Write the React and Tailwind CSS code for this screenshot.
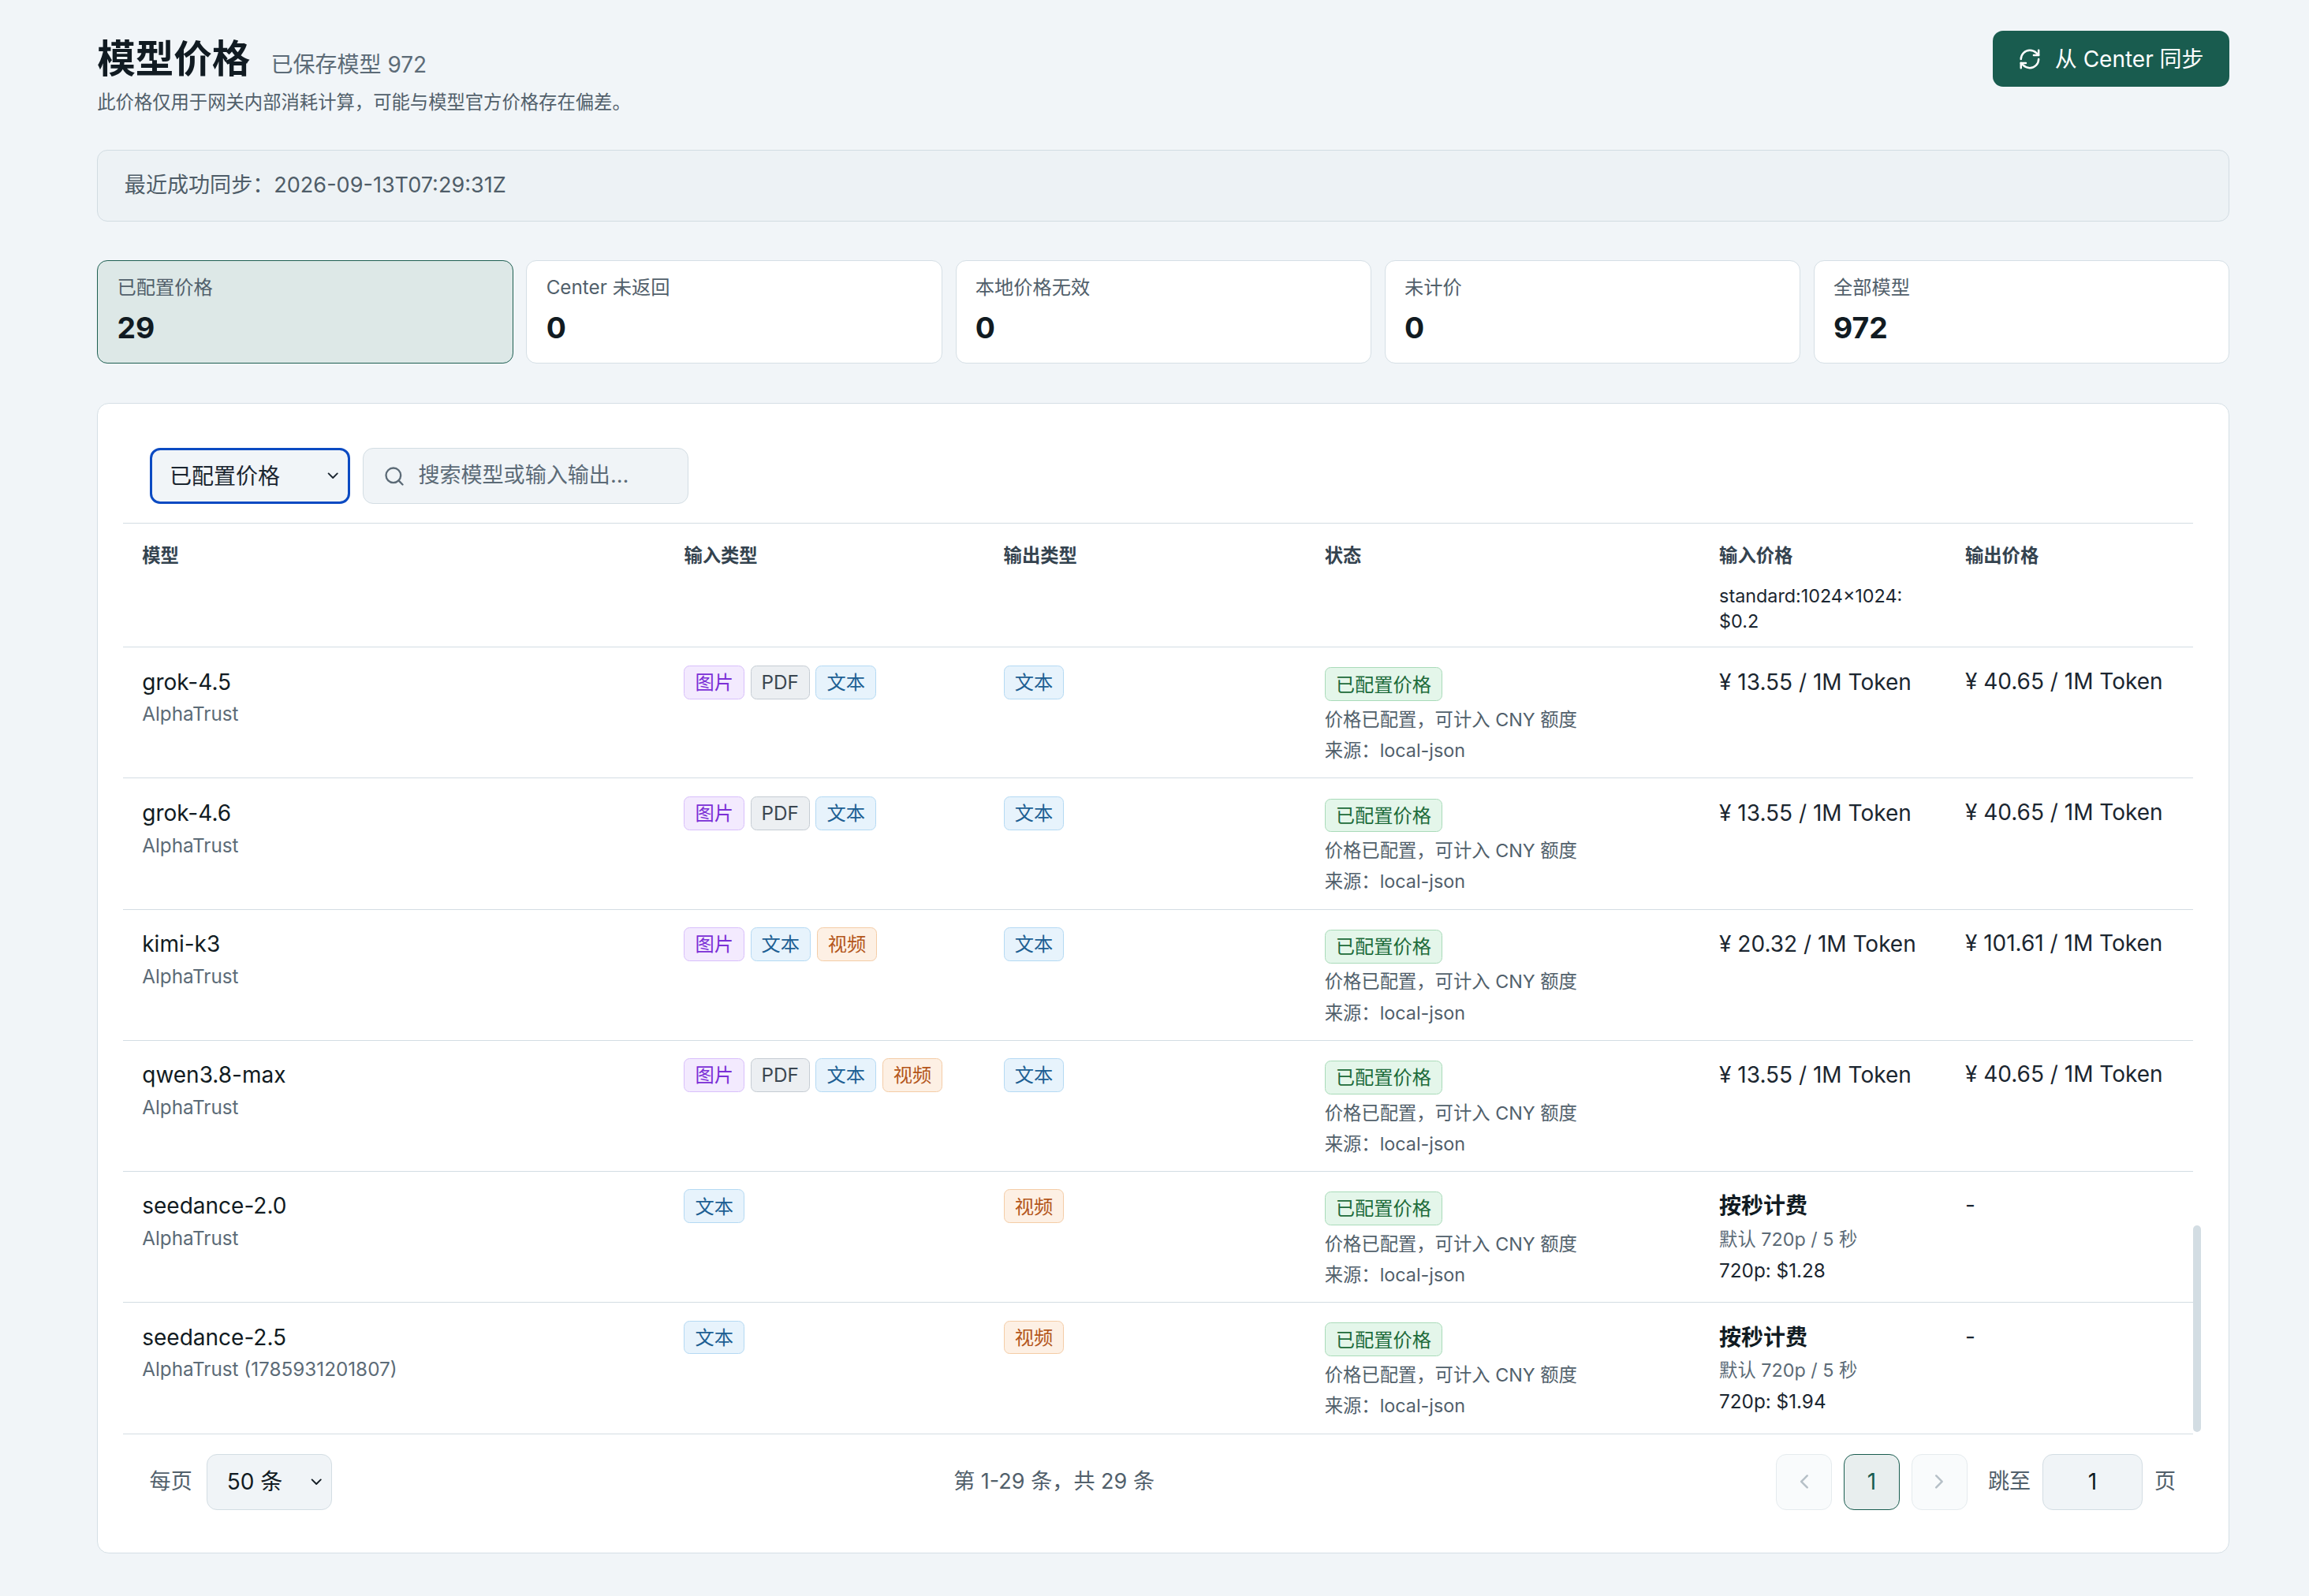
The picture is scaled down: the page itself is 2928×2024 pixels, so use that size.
import React from 'react';
import { RefreshCw, Search, ChevronDown, ChevronLeft, ChevronRight } from 'lucide-react';

const font = { fontFamily: 'Inter, "Noto Sans CJK SC", sans-serif' };

const tagStyles = {
  '图片': 'bg-[#f3eafe] border-[#d8bffb] text-[#7b2fd6]',
  'PDF': 'bg-[#eceff2] border-[#c5ccd3] text-[#3b4650]',
  '文本': 'bg-[#e7f3fc] border-[#b4d9f3] text-[#1d5f93]',
  '视频': 'bg-[#fdf0e4] border-[#f4cca6] text-[#b4561a]',
};

function Tag({ t }) {
  return <span className={`inline-flex items-center h-[23px] px-[7px] rounded-[4px] border text-[13px] ${tagStyles[t]}`}>{t}</span>;
}

const rows = [
  { name: 'grok-4.5', sub: 'AlphaTrust', inp: ['图片', 'PDF', '文本'], out: ['文本'], ip: '¥ 13.55 / 1M Token', op: '¥ 40.65 / 1M Token' },
  { name: 'grok-4.6', sub: 'AlphaTrust', inp: ['图片', 'PDF', '文本'], out: ['文本'], ip: '¥ 13.55 / 1M Token', op: '¥ 40.65 / 1M Token' },
  { name: 'kimi-k3', sub: 'AlphaTrust', inp: ['图片', '文本', '视频'], out: ['文本'], ip: '¥ 20.32 / 1M Token', op: '¥ 101.61 / 1M Token' },
  { name: 'qwen3.8-max', sub: 'AlphaTrust', inp: ['图片', 'PDF', '文本', '视频'], out: ['文本'], ip: '¥ 13.55 / 1M Token', op: '¥ 40.65 / 1M Token' },
  { name: 'seedance-2.0', sub: 'AlphaTrust', inp: ['文本'], out: ['视频'], sec: '720p: $1.28', op: '-' },
  { name: 'seedance-2.5', sub: 'AlphaTrust (1785931201807)', inp: ['文本'], out: ['视频'], sec: '720p: $1.94', op: '-' },
];

const cols = 'grid grid-cols-[368px_217px_218px_268px_167px_1fr]';

const stats = [
  ['已配置价格', '29', true], ['Center 未返回', '0'], ['本地价格无效', '0'], ['未计价', '0'], ['全部模型', '972'],
];

export default function App() {
  return (
    <div className="[zoom:1.8673] bg-[#f1f5f8] min-h-[1084px] text-[#1b2630]" style={font}>
      <div className="pl-[66px] pr-[54px] pt-[21px] pb-[26px]">
        <div className="flex justify-between items-start">
          <div>
            <div className="flex items-baseline gap-[14px] mt-[2px]">
              <h1 className="text-[26px] font-bold text-[#111b22] leading-[34px]">模型价格</h1>
              <span className="text-[15px] text-[#5c6b77]">已保存模型 972</span>
            </div>
            <p className="text-[12.5px] text-[#51606b] mt-[3px]">此价格仅用于网关内部消耗计算，可能与模型官方价格存在偏差。</p>
          </div>
          <button className="h-[38px] w-[161px] rounded-[7px] bg-[#195c4f] text-white text-[15px] flex items-center justify-center gap-[9px]">
            <RefreshCw size={16} strokeWidth={2} /> 从 Center 同步
          </button>
        </div>

        <div className="mt-[23px] h-[49px] rounded-[7px] border border-[#d2dce2] bg-[#edf2f5] flex items-center px-[18px] text-[14.5px] text-[#4f5d68]">
          最近成功同步：2026-09-13T07:29:31Z
        </div>

        <div className="mt-[26px] grid grid-cols-5 gap-[9px]">
          {stats.map(([l, v, a]) => (
            <div key={l} className={`h-[70px] rounded-[7px] border px-[13px] pt-[8px] ${a ? 'bg-[#dde8e7] border-[#1e5f52]' : 'bg-white border-[#d5dfe5]'}`}>
              <div className="text-[13px] text-[#51606b]">{l}</div>
              <div className="text-[20px] font-bold text-[#111b22] mt-[3px]">{v}</div>
            </div>
          ))}
        </div>

        <div className="mt-[27px] rounded-[8px] border border-[#d5dfe5] bg-white px-[17px] pt-[30px] pb-[29px]">
          <div className="flex gap-[9px] pl-[18px]">
            <div className="h-[38px] w-[136px] rounded-[7px] border-2 border-[#0b4ac2] bg-[#f1f5f8] flex items-center justify-between pl-[12px] pr-[4px] text-[15px]">
              已配置价格 <ChevronDown size={12} />
            </div>
            <div className="h-[38px] w-[221px] rounded-[7px] border border-[#d3dde3] bg-[#f0f4f7] flex items-center pl-[13px] gap-[9px] text-[14.5px] text-[#5c6b77] overflow-hidden whitespace-nowrap">
              <Search size={15} className="shrink-0" /> <span className="w-[152px] overflow-hidden text-ellipsis">搜索模型或输入输出类型</span>
            </div>
          </div>

          <div className="mt-[13px] flex">
            <div className="flex-1 border-t border-b border-[#d3dde3]">
              <div className={`${cols} pl-[13px] h-[84px] pt-[12px] text-[12.5px] font-semibold text-[#34434f] border-b border-[#d3dde3]`}>
                <div>模型</div><div>输入类型</div><div>输出类型</div><div>状态</div>
                <div>输入价格<div className="font-normal text-[#1b2630] mt-[10px] leading-[17px]">standard:1024x1024:<br />$0.2</div></div>
                <div>输出价格</div>
              </div>
              {rows.map((r, i) => (
                <div key={r.name} className={`${cols} pl-[13px] h-[89px] pt-[12px] ${i < rows.length - 1 ? 'border-b border-[#d3dde3]' : ''}`}>
                  <div>
                    <div className="text-[15px] text-[#111b22]">{r.name}</div>
                    <div className="text-[13px] text-[#5c6b77] mt-[1px]">{r.sub}</div>
                  </div>
                  <div className="flex gap-[4px] items-start">{r.inp.map(t => <Tag key={t} t={t} />)}</div>
                  <div className="flex gap-[4px] items-start">{r.out.map(t => <Tag key={t} t={t} />)}</div>
                  <div>
                    <span className="inline-flex items-center h-[23px] px-[7px] rounded-[4px] border border-[#a9dbb9] bg-[#e4f6ea] text-[#1d6b3a] text-[13px]">已配置价格</span>
                    <div className="text-[12.5px] text-[#51606b] mt-[2px] leading-[21px]">价格已配置，可计入 CNY 额度<br />来源：local-json</div>
                  </div>
                  <div className="text-[15px] pr-[4px]">
                    {r.ip ? r.ip : (
                      <>
                        <div className="font-semibold text-[#111b22]">按秒计费</div>
                        <div className="text-[12.5px] text-[#5c6b77] mt-[2px]">默认 720p / 5 秒</div>
                        <div className="text-[13px] mt-[2px]">{r.sec}</div>
                      </>
                    )}
                  </div>
                  <div className="text-[15px] leading-[22px] max-w-[138px]">{r.op}</div>
                </div>
              ))}
            </div>
            <div className="w-[7px] flex flex-col justify-end">
              <div className="h-[140px] w-[5px] rounded-full bg-[#d3dde3] mb-[2px]" />
            </div>
          </div>

          <div className="mt-[13px] flex items-center justify-between pl-[18px] pr-[19px] text-[14.5px] text-[#51606b]">
            <div className="flex items-center gap-[10px]">
              每页
              <div className="h-[38px] w-[85px] rounded-[7px] border border-[#d3dde3] bg-[#f0f4f7] flex items-center justify-between pl-[13px] pr-[4px] text-[#111b22] text-[15px]">
                50 条 <ChevronDown size={12} />
              </div>
            </div>
            <div>第 1-29 条，共 29 条</div>
            <div className="flex items-center gap-[8px]">
              <div className="h-[38px] w-[38px] rounded-[7px] border border-[#e5ebee] bg-[#f9fbfc] flex items-center justify-center text-[#b6c0c7]"><ChevronLeft size={16} /></div>
              <div className="h-[38px] w-[38px] rounded-[7px] border border-[#195c4f] bg-[#e8eeee] flex items-center justify-center text-[#195c4f] text-[15px]">1</div>
              <div className="h-[38px] w-[38px] rounded-[7px] border border-[#e5ebee] bg-[#f9fbfc] flex items-center justify-center text-[#b6c0c7]"><ChevronRight size={16} /></div>
              <span className="ml-[6px]">跳至</span>
              <div className="h-[38px] w-[68px] rounded-[7px] border border-[#d3dde3] bg-[#f0f4f7] flex items-center justify-center text-[#111b22] text-[15px]">1</div>
              <span>页</span>
            </div>
          </div>
        </div>
      </div>
    </div>
  );
}
